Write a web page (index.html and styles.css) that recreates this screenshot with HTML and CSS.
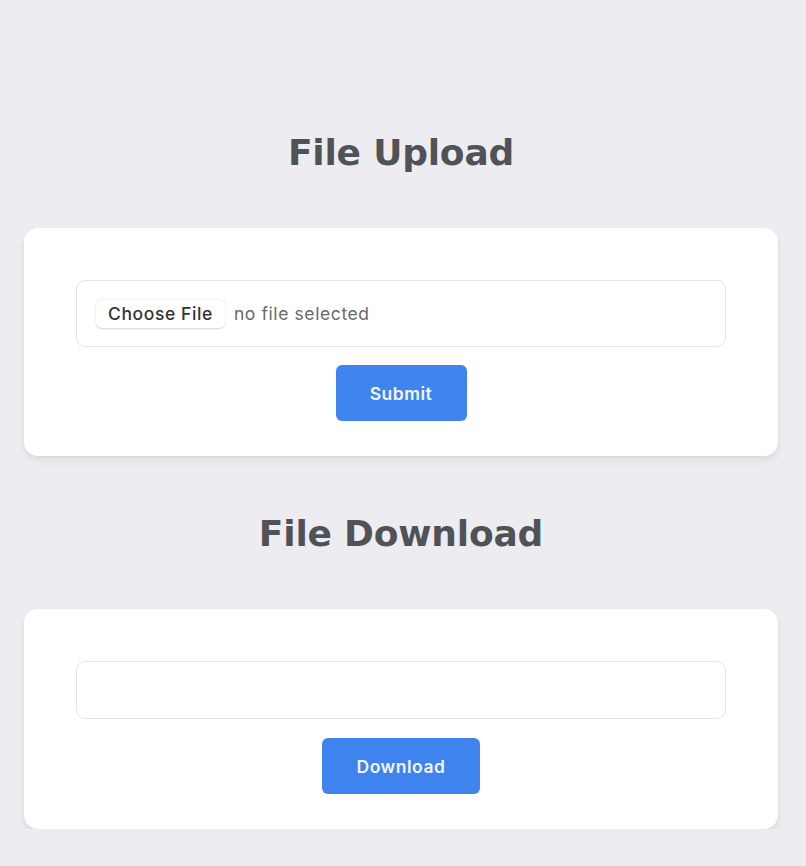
FILE: index.html
```html
<!DOCTYPE html>
<html>
<head>
<meta charset="utf-8">
<link rel="stylesheet" href="styles.css">
</head>
<body>
<main class="page">
  <h1 class="title">File Upload</h1>
  <section class="card">
    <div class="field file-field">
      <span class="choose-btn">Choose File</span>
      <span class="file-status">no file selected</span>
    </div>
    <button class="btn btn-submit">Submit</button>
  </section>
  <h1 class="title title-second">File Download</h1>
  <section class="card">
    <div class="field text-field"></div>
    <button class="btn btn-download">Download</button>
  </section>
</main>
</body>
</html>
```
FILE: styles.css
```css
html, body {
  margin: 0;
  padding: 0;
  background: #ededf1;
  font-family: "Inter", "Liberation Sans", sans-serif;
}
.page {
  width: 754px;
  margin-left: 24px;
  padding-top: 133px;
  display: flex;
  flex-direction: column;
}
.title {
  margin: 0 0 55px;
  height: 40px;
  line-height: 40px;
  text-align: center;
  font-family: "DejaVu Sans", Verdana, sans-serif;
  font-weight: bold;
  font-size: 36px;
  color: #505256;
  letter-spacing: -0.2px;
}
.title-second {
  margin-top: 58px;
}
.card {
  background: #ffffff;
  border-radius: 14px;
  box-shadow: 0 4px 7px rgba(0,0,0,0.07), 0 1px 2px rgba(0,0,0,0.04);
  padding: 52px 52px 35px;
  display: flex;
  flex-direction: column;
  align-items: center;
}
.field {
  align-self: stretch;
  box-sizing: border-box;
  border: 1.5px solid #e4e4e7;
  border-radius: 9px;
  background: #fff;
}
.file-field {
  height: 67px;
  display: flex;
  align-items: center;
  padding-left: 19px;
  gap: 9px;
}
.choose-btn {
  height: 28px;
  line-height: 28px;
  padding: 0 12px;
  border-radius: 6px;
  background: #fff;
  box-shadow: 0 0.5px 2px rgba(0,0,0,0.18);
  font-size: 17.5px;
  letter-spacing: 0.6px;
  color: #333336;
  font-weight: 500;
}
.file-status {
  font-size: 17.5px;
  letter-spacing: 0.6px;
  color: #6a6a6e;
}
.text-field {
  height: 58px;
}
.btn {
  margin-top: 18px;
  height: 56px;
  border: none;
  border-radius: 6px;
  background: #3f83ee;
  color: #f2f6ff;
  font-family: "Inter", "Liberation Sans", sans-serif;
  font-size: 17.5px;
  letter-spacing: 0.5px;
  font-weight: 600;
  cursor: pointer;
}
.btn-submit {
  width: 131px;
}
.btn-download {
  margin-top: 19px;
  width: 158px;
}
```
